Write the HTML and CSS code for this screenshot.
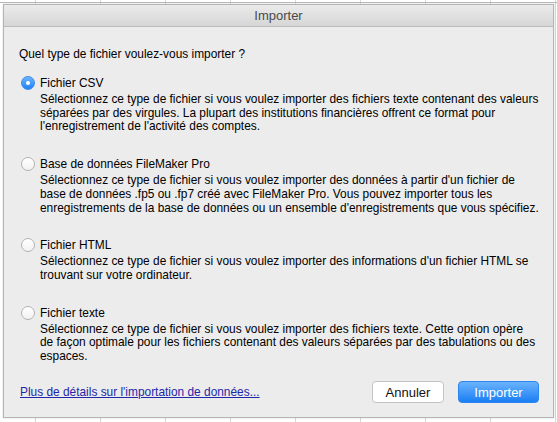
FILE: index.html
```html
<!DOCTYPE html>
<html lang="fr">
<head>
<meta charset="utf-8">
<title>Importer</title>
<link rel="stylesheet" href="styles.css">
</head>
<body>
<div class="desktop">
  <div class="window">
    <div class="titlebar">Importer</div>
    <div class="content">
      <p class="question">Quel type de fichier voulez-vous importer ?</p>
      <div class="options">
        <div class="option">
          <span class="radio checked"></span>
          <div class="option-body">
            <div class="label">Fichier CSV</div>
            <p class="desc">Sélectionnez ce type de fichier si vous voulez importer des fichiers texte contenant des valeurs<br>séparées par des virgules. La plupart des institutions financières offrent ce format pour<br>l'enregistrement de l'activité des comptes.</p>
          </div>
        </div>
        <div class="option">
          <span class="radio"></span>
          <div class="option-body">
            <div class="label">Base de données FileMaker Pro</div>
            <p class="desc">Sélectionnez ce type de fichier si vous voulez importer des données à partir d'un fichier de<br>base de données .fp5 ou .fp7 créé avec FileMaker Pro. Vous pouvez importer tous les<br>enregistrements de la base de données ou un ensemble d'enregistrements que vous spécifiez.</p>
          </div>
        </div>
        <div class="option">
          <span class="radio"></span>
          <div class="option-body">
            <div class="label">Fichier HTML</div>
            <p class="desc">Sélectionnez ce type de fichier si vous voulez importer des informations d'un fichier HTML se<br>trouvant sur votre ordinateur.</p>
          </div>
        </div>
        <div class="option">
          <span class="radio"></span>
          <div class="option-body">
            <div class="label">Fichier texte</div>
            <p class="desc">Sélectionnez ce type de fichier si vous voulez importer des fichiers texte. Cette option opère<br>de façon optimale pour les fichiers contenant des valeurs séparées par des tabulations ou des<br>espaces.</p>
          </div>
        </div>
      </div>
      <div class="footer">
        <a class="help-link" href="#">Plus de détails sur l'importation de données...</a>
        <div class="buttons">
          <button class="btn">Annuler</button>
          <button class="btn primary">Importer</button>
        </div>
      </div>
    </div>
  </div>
</div>
</body>
</html>
```
FILE: styles.css
```css
html, body {
  margin: 0;
  padding: 0;
}
body {
  width: 557px;
  height: 422px;
  overflow: hidden;
  font-family: "Liberation Sans", Arial, sans-serif;
  background-color: #ffffff;
  background-image:
    linear-gradient(to bottom, transparent 2px, #b9b9b9 2px, #b9b9b9 3px, transparent 3px),
    repeating-linear-gradient(to right, transparent 0, transparent 35px, #d6d6d6 35px, #d6d6d6 36px, transparent 36px, transparent 65px);
  background-position: 0 0, 0 0;
}
.desktop {
  padding: 4px 3px 0 3px;
}
.window {
  width: 549px;
  height: 412px;
  border: 1px solid #b4b4b4;
  background: #ececec;
  display: flex;
  flex-direction: column;
  box-shadow: 0 0 2px rgba(0,0,0,0.15);
}
.titlebar {
  height: 21px;
  line-height: 21px;
  text-align: center;
  font-size: 13px;
  color: #4a4a4a;
  background: linear-gradient(to bottom, #ebebeb, #d6d6d6);
  border-bottom: 1px solid #bcbcbc;
}
.content {
  flex: 1;
  display: flex;
  flex-direction: column;
  padding: 20px 14px 14px 15px;
  font-size: 11.9px;
  color: #000;
}
.question {
  margin: 0 0 15px 0;
  line-height: 14px;
}
.options {
  display: flex;
  flex-direction: column;
  gap: 23px;
}
.option {
  display: flex;
  align-items: flex-start;
}
.radio {
  flex: none;
  width: 12px;
  height: 12px;
  margin: 0 5px 0 2px;
  border-radius: 50%;
  border: 1px solid #b2b2b2;
  background: linear-gradient(to bottom, #ffffff, #f2f2f2);
  position: relative;
}
.radio.checked {
  border-color: #3a8ef0;
  background: linear-gradient(to bottom, #6db4fb, #1f82f5);
}
.radio.checked::after {
  content: "";
  position: absolute;
  left: 4px;
  top: 4px;
  width: 4px;
  height: 4px;
  border-radius: 50%;
  background: #fff;
}
.option-body {
  flex: 1;
  white-space: nowrap;
}
.label {
  line-height: 14px;
}
.desc {
  margin: 3px 0 0 0;
  line-height: 13.7px;
}
.footer {
  margin-top: auto;
  display: flex;
  align-items: center;
  justify-content: space-between;
}
.help-link {
  color: #1f27a8;
  text-decoration: underline;
  line-height: 14px;
  margin-left: 1px;
}
.buttons {
  display: flex;
  gap: 14px;
}
.btn {
  height: 22px;
  border-radius: 4px;
  font-family: "Liberation Sans", Arial, sans-serif;
  font-size: 13px;
  padding: 0;
  border: 1px solid #c4c4c4;
  background: #ffffff;
  color: #111;
  width: 72px;
}
.btn.primary {
  width: 81px;
  border-color: #2c86ee;
  background: linear-gradient(to bottom, #6ab3fb, #1a7ff4);
  color: #fff;
}
```
